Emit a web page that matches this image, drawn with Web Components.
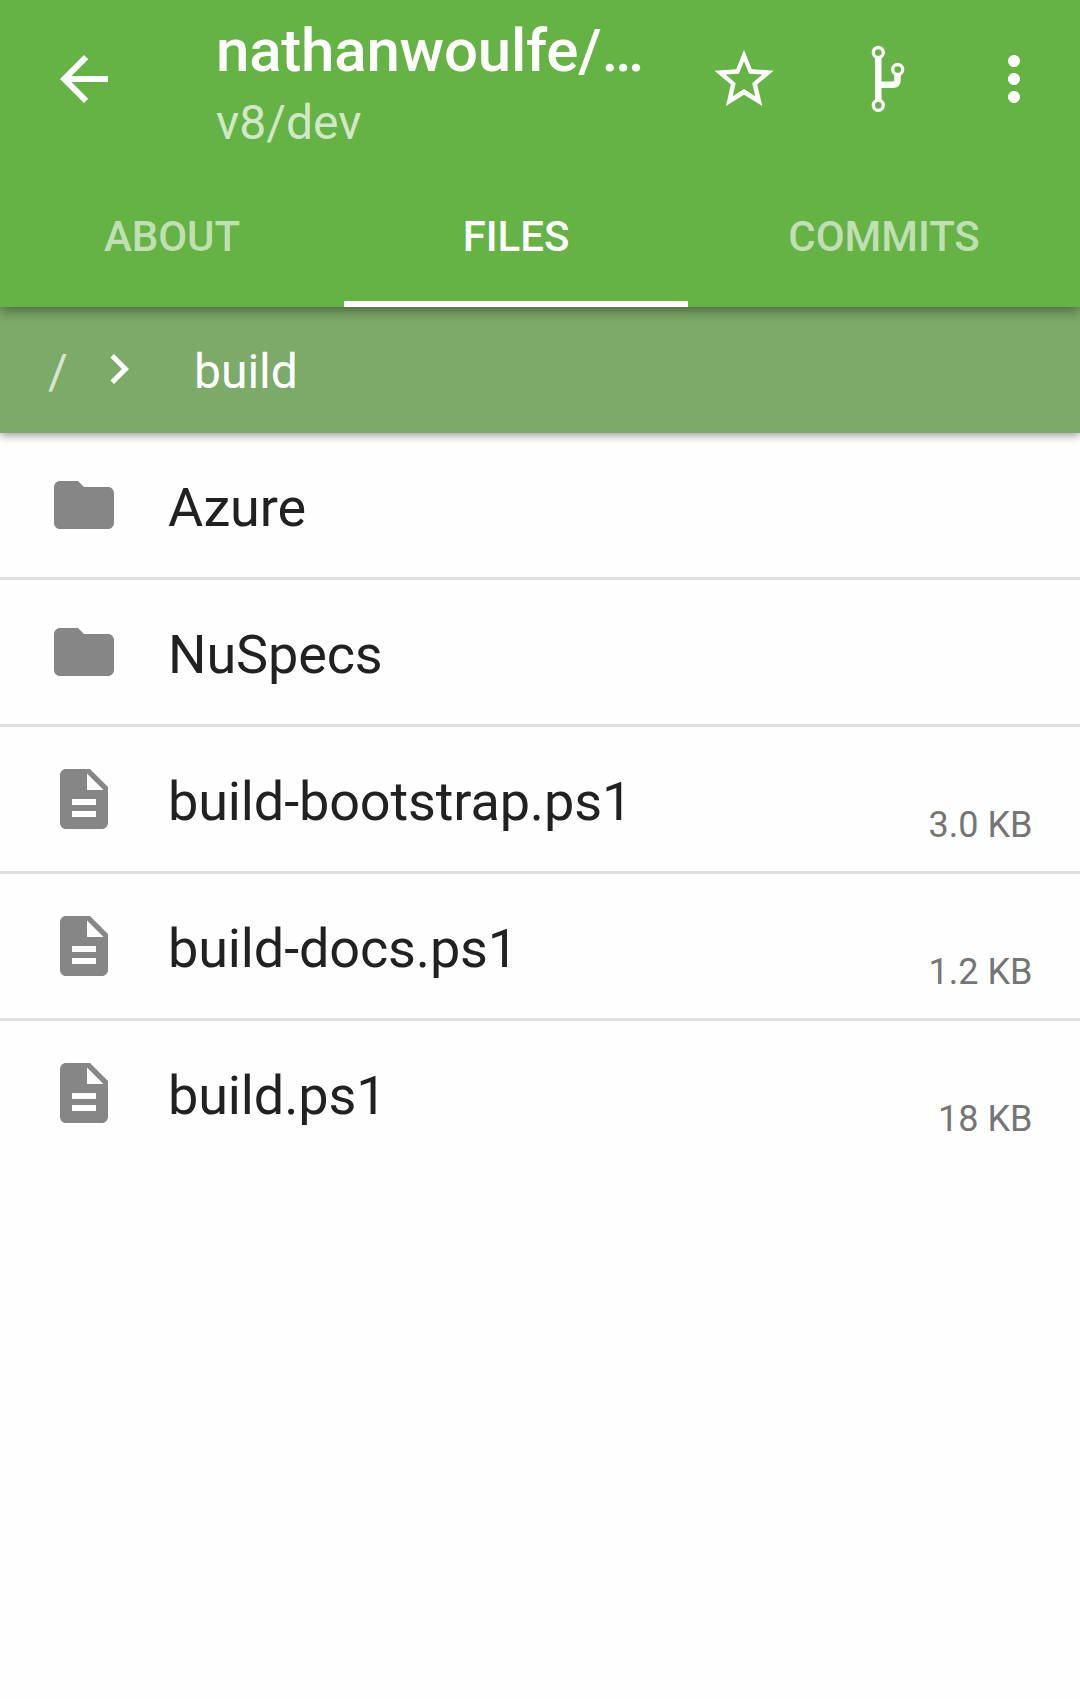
<!DOCTYPE html>
<html lang="en">
<head>
<meta charset="utf-8">
<title>Repository files</title>
<style>
  html, body { margin: 0; height: 100%; }
  body { background: #fefefe; font-family: Roboto, "Liberation Sans", sans-serif; overflow: hidden; }
</style>
</head>
<body>
<repo-screen></repo-screen>
<script>
const define = (name, markup) => {
  const template = document.createElement('template');
  template.innerHTML = markup;
  customElements.define(name, class extends HTMLElement {
    constructor() {
      super();
      this.attachShadow({ mode: 'open' }).append(template.content.cloneNode(true));
    }
  });
};

const ICONS = {
  back: ['0 0 24 24', '<path d="M20 11H7.83l5.59-5.59L12 4l-8 8 8 8 1.41-1.41L7.83 13H20v-2z"/>'],
  star: ['0 3 216 216', '<path fill-rule="evenodd" d="M108 23L131.500 81.500L197 86L147.500 127.500L163 192L108 158L54 192L68.500 127.500L19.500 86L84.500 81.500ZM108 58L92.500 95L53 97.500L83 124L74 163L108 141L142 163L132.500 124L163 97.500L123.500 95Z"/>'],
  branch: ['0 0 72 72', '<path d="M32.300 14.500V57.500M32.300 41.700H46.500Q51.500 41.700 51.500 36.700V31.500" fill="none" stroke="currentColor" stroke-width="6.500"/><g fill="none" stroke="currentColor" stroke-width="3.300"><circle cx="32.300" cy="9.500" r="5"/><circle cx="32.300" cy="62.300" r="5"/><circle cx="51.700" cy="26.500" r="5"/></g>'],
  more: ['0 0 24 24', '<path d="M12 8c1.1 0 2-.9 2-2s-.9-2-2-2-2 .9-2 2 .9 2 2 2zm0 2c-1.1 0-2 .9-2 2s.9 2 2 2 2-.9 2-2-.9-2-2-2zm0 6c-1.1 0-2 .9-2 2s.9 2 2 2 2-.9 2-2-.9-2-2-2z"/>'],
  chevron: ['0 0 24 24', '<path d="M10 6L8.590 7.410 13.170 12l-4.580 4.590L10 18l6-6z"/>'],
  folder: ['0 0 24 24', '<path d="M10 4H4c-1.100 0-1.990.9-1.990 2L2 18c0 1.100.9 2 2 2h16c1.100 0 2-.9 2-2V8c0-1.100-.9-2-2-2h-8l-2-2z"/>'],
  file: ['0 0 24 24', '<path d="M14 2H6c-1.100 0-1.990.9-1.990 2L4 20c0 1.100.89 2 1.990 2H18c1.100 0 2-.9 2-2V8l-6-6zm2 16H8v-2h8v2zm0-4H8v-2h8v2zm-3-5V3.500L18.500 9H13z"/>']
};

customElements.define('app-icon', class extends HTMLElement {
  static observedAttributes = ['name'];
  constructor() {
    super();
    this.attachShadow({ mode: 'open' });
  }
  attributeChangedCallback() {
    const icon = ICONS[this.getAttribute('name')];
    if (!icon) return;
    this.shadowRoot.innerHTML = `<style>
      :host { display: block; flex: none; width: 72px; height: 72px; }
      svg { display: block; width: 100%; height: 100%; fill: currentColor; }
    </style><svg viewBox="${icon[0]}" aria-hidden="true">${icon[1]}</svg>`;
  }
});

define('app-toolbar', `<style>
  :host { display: flex; align-items: center; height: 158px; padding: 0 30px 0 48px; box-sizing: border-box; color: #fff; }
  .titles { flex: 1; min-width: 0; margin-left: 96px; height: 158px; }
  .title { height: 70px; line-height: 70px; padding-top: 16px; font-size: 60px; font-weight: 500; letter-spacing: -.2px; white-space: nowrap; }
  .subtitle { height: 56px; line-height: 56px; padding-top: 9px; font-size: 48px; opacity: .7; }
  .actions { display: flex; gap: 66px; flex: none; }
  .actions app-icon:last-child { margin-left: -6px; }
</style>
<app-icon name="back"></app-icon>
<div class="titles"><div class="title"><slot name="title"></slot></div><div class="subtitle"><slot name="subtitle"></slot></div></div>
<div class="actions"><app-icon name="star"></app-icon><app-icon name="branch"></app-icon><app-icon name="more"></app-icon></div>`);

define('tab-bar', `<style>
  :host { display: grid; grid-template-columns: 344px 344px 1fr; height: 149px; }
</style><slot></slot>`);

define('tab-item', `<style>
  :host { display: flex; justify-content: center; box-sizing: border-box; padding-top: 54px; color: rgba(255,255,255,.6); border-bottom: 6px solid transparent; font-size: 42px; line-height: 50px; font-weight: 500; letter-spacing: -.05px; }
  :host([selected]) { color: #fff; border-color: #fff; }
</style><span><slot></slot></span>`);

define('path-bar', `<style>
  :host { display: flex; align-items: center; height: 126px; padding-left: 48px; box-sizing: border-box; background: #7caa68; color: #fff; font-size: 48px; line-height: 56px; box-shadow: 0 3px 8px rgba(0,0,0,.36); }
  .root { width: 41px; opacity: .7; padding-top: 4px; }
  app-icon { width: 60px; height: 60px; margin-top: -3px; }
  .current { margin-left: 45px; padding-top: 4px; }
</style><span class="root"><slot name="root"></slot></span><app-icon name="chevron"></app-icon><span class="current"><slot></slot></span>`);

const rowTemplate = document.createElement('template');
rowTemplate.innerHTML = `<style>
  :host { display: flex; height: 144px; padding: 0 47.5px 0 48px; border-bottom: 3px solid #e0e0e0; color: #212121; }
  :host(:last-child) { border-bottom: 0; }
  app-icon { margin-top: 36px; color: #868686; }
  .name { flex: 1; margin-left: 48px; padding-top: 43px; font-size: 54px; line-height: 64px; letter-spacing: -.13px; }
  .size { padding-top: 77px; font-size: 36px; line-height: 42px; color: #757575; letter-spacing: 0; }
</style><app-icon></app-icon><span class="name"><slot></slot></span><span class="size"><slot name="size"></slot></span>`;

customElements.define('file-row', class extends HTMLElement {
  constructor() {
    super();
    this.attachShadow({ mode: 'open' }).append(rowTemplate.content.cloneNode(true));
  }
  connectedCallback() {
    this.shadowRoot.querySelector('app-icon').setAttribute('name', this.getAttribute('kind'));
  }
});

define('file-list', `<style>:host { display: flex; flex-direction: column; }</style><slot></slot>`);

define('repo-screen', `<style>
  :host { display: flex; flex-direction: column; min-height: 100%; }
  header { background: #65b245; position: relative; z-index: 2; box-shadow: 0 4px 12px rgba(0,0,0,.4); }
  path-bar { position: relative; z-index: 1; }
</style>
<header>
  <app-toolbar><span slot="title">nathanwoulfe/…</span><span slot="subtitle">v8/dev</span></app-toolbar>
  <tab-bar><tab-item>ABOUT</tab-item><tab-item selected>FILES</tab-item><tab-item>COMMITS</tab-item></tab-bar>
</header>
<path-bar><span slot="root">/</span>build</path-bar>
<file-list>
  <file-row kind="folder">Azure</file-row>
  <file-row kind="folder">NuSpecs</file-row>
  <file-row kind="file">build-bootstrap.ps1<span slot="size">3.0 KB</span></file-row>
  <file-row kind="file">build-docs.ps1<span slot="size">1.2 KB</span></file-row>
  <file-row kind="file">build.ps1<span slot="size">18 KB</span></file-row>
</file-list>`);
</script>
</body>
</html>
